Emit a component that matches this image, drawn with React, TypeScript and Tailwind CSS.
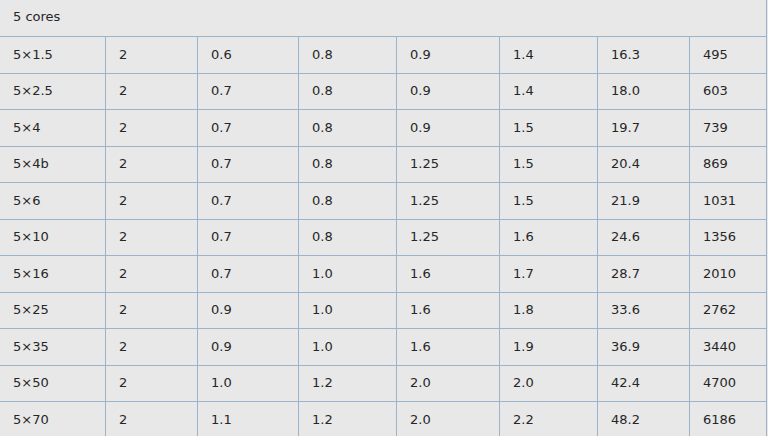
const rows: string[][] = [
  ["5×1.5", "2", "0.6", "0.8", "0.9", "1.4", "16.3", "495"],
  ["5×2.5", "2", "0.7", "0.8", "0.9", "1.4", "18.0", "603"],
  ["5×4", "2", "0.7", "0.8", "0.9", "1.5", "19.7", "739"],
  ["5×4b", "2", "0.7", "0.8", "1.25", "1.5", "20.4", "869"],
  ["5×6", "2", "0.7", "0.8", "1.25", "1.5", "21.9", "1031"],
  ["5×10", "2", "0.7", "0.8", "1.25", "1.6", "24.6", "1356"],
  ["5×16", "2", "0.7", "1.0", "1.6", "1.7", "28.7", "2010"],
  ["5×25", "2", "0.9", "1.0", "1.6", "1.8", "33.6", "2762"],
  ["5×35", "2", "0.9", "1.0", "1.6", "1.9", "36.9", "3440"],
  ["5×50", "2", "1.0", "1.2", "2.0", "2.0", "42.4", "4700"],
  ["5×70", "2", "1.1", "1.2", "2.0", "2.2", "48.2", "6186"],
];

export default function App() {
  return (
    <div
      className="w-[768px] h-[436px] overflow-hidden bg-[#e8e8e8] text-[13px] text-[#262626]"
      style={{ fontFamily: '"DejaVu Sans", Verdana, sans-serif' }}
    >
      <div className="w-[767px] border-r border-[#9ab4cb]">
        <div className="h-[37px] flex items-center pl-[13px] pb-[2px] border-b border-[#9ab4cb]">
          5 cores
        </div>
        {rows.map((r) => (
          <div
            key={r[0]}
            className="grid grid-cols-[106px_92px_101px_98px_103px_98px_92px_76px] h-[36.5px] border-b border-[#9ab4cb]"
          >
            {r.map((c, i) => (
              <div
                key={i}
                className={`flex items-center pl-[13px] pb-[1px] ${i < 7 ? "border-r border-[#9ab4cb]" : ""}`}
              >
                {c}
              </div>
            ))}
          </div>
        ))}
      </div>
    </div>
  );
}
